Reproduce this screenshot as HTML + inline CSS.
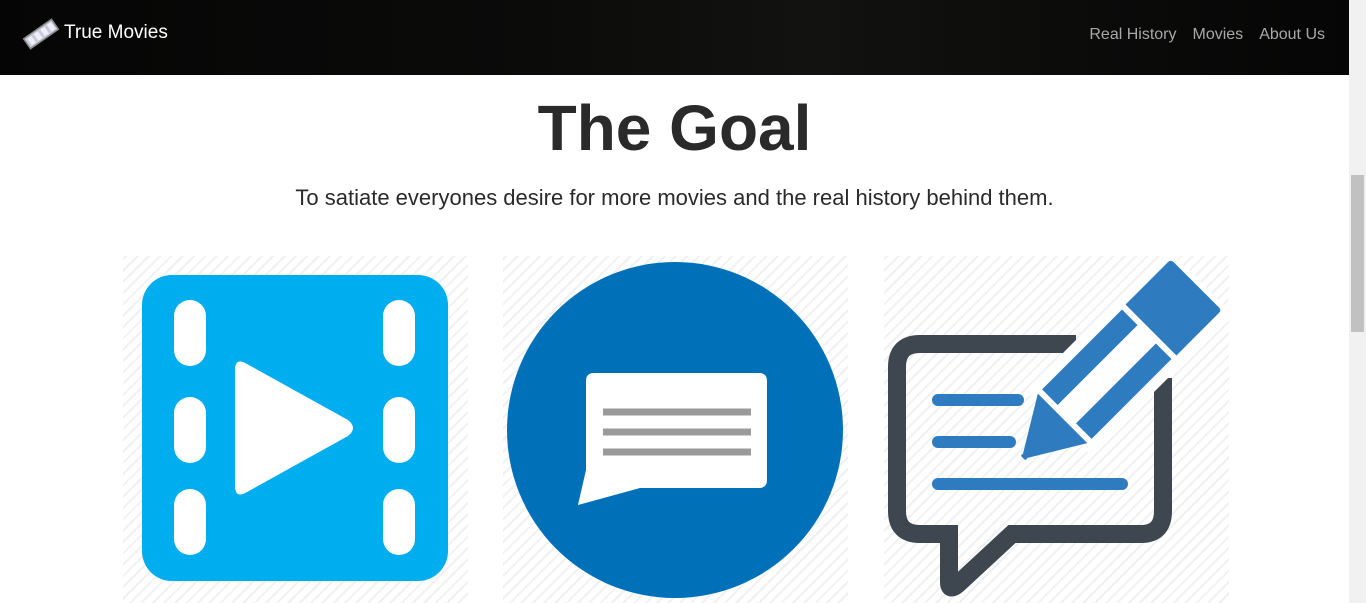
<!DOCTYPE html>
<html><head><meta charset="utf-8"><style>
*{margin:0;padding:0;box-sizing:border-box}
html,body{width:1366px;height:603px;overflow:hidden;background:#fff;font-family:"Liberation Sans",sans-serif;color:#212529}
.nav{position:absolute;left:0;top:0;width:1349px;height:75px;background:linear-gradient(90deg,#050505,#0b0b0a 40%,#121210 60%,#050505)}
.brand{position:absolute;left:64px;top:22px;color:#fff;font-size:19px}
.links{position:absolute;right:24px;top:26px;color:#a8a8a8;font-size:16px}
.links span{margin-left:16px}
.sb{position:absolute;left:1349px;top:0;width:17px;height:603px;background:#f1f1f1}
.sb div{position:absolute;left:2px;top:175px;width:13px;height:157px;background:#c1c1c1}
h1{position:absolute;left:0;width:1349px;top:91px;text-align:center;font-size:64px;font-weight:bold;color:#2a2a2a}
p{position:absolute;left:0;width:1349px;top:185px;text-align:center;font-size:22px;color:#2a2a2a}
.tile{position:absolute;top:256px;width:345px;height:347px;background:repeating-linear-gradient(-45deg,#fff 0 6px,#f1f1f1 6px 8px)}
</style></head><body>
<div class="nav">
<svg style="position:absolute;left:22px;top:16px" width="38" height="36" viewBox="0 0 38 36"><g transform="rotate(-35 19 18)"><rect x="2" y="12" width="34" height="12" fill="#c8ccd6" stroke="#888" stroke-width="1.5"/><rect x="5" y="14" width="5" height="8" fill="#eef"/><rect x="13" y="14" width="5" height="8" fill="#eef"/><rect x="21" y="14" width="5" height="8" fill="#eef"/><rect x="29" y="14" width="5" height="8" fill="#eef"/></g></svg>
<div class="brand">True Movies</div>
<div class="links"><span>Real History</span><span>Movies</span><span>About Us</span></div>
</div>
<div class="sb"><div></div></div>
<h1>The Goal</h1>
<p>To satiate everyones desire for more movies and the real history behind them.</p>
<div class="tile" style="left:123px"></div>
<div class="tile" style="left:503px"></div>
<div class="tile" style="left:884px"></div>
<svg style="position:absolute;left:0;top:0" width="1349" height="603">
<rect x="142" y="275" width="306" height="306" rx="30" fill="#00adef"/>
<g fill="#fff">
<rect x="174" y="300" width="32" height="66" rx="16"/><rect x="174" y="397" width="32" height="66" rx="16"/><rect x="174" y="489" width="32" height="66" rx="16"/>
<rect x="383" y="300" width="32" height="66" rx="16"/><rect x="383" y="397" width="32" height="66" rx="16"/><rect x="383" y="489" width="32" height="66" rx="16"/>
<path d="M235 370 Q235 357 247 364 L348 420 Q358 428 348 436 L247 492 Q235 499 235 486 Z"/>
</g>
<circle cx="675" cy="430" r="168" fill="#0071b9"/>
<path d="M594 373 H759 Q767 373 767 381 V480 Q767 488 759 488 H640 L578 505 L586 470 V381 Q586 373 594 373 Z" fill="#fff"/>
<g stroke="#9a9a9a" stroke-width="7"><line x1="603" y1="412" x2="751" y2="412"/><line x1="603" y1="432" x2="751" y2="432"/><line x1="603" y1="452" x2="751" y2="452"/></g>
<path d="M1076 344 H920 Q897 344 897 367 V511 Q897 534 920 534 H949 V582 Q949 592 958 584 L1012 534 H1141 Q1163 534 1163 511 V378" fill="none" stroke="#3e4650" stroke-width="18"/>
<g stroke="#2f7bbf" stroke-width="12" stroke-linecap="round"><line x1="938" y1="400" x2="1018" y2="400"/><line x1="938" y1="442" x2="1010" y2="442"/><line x1="938" y1="484" x2="1122" y2="484"/></g>
<g transform="translate(1023,458) rotate(-45)">
<rect x="50" y="-46" width="200" height="92" fill="#fff"/>
<path d="M0 -2 L0 2 Q0 4 3 3 L56 35 L56 -35 L3 -3 Q0 -4 0 -2Z" fill="#2f7bbf"/>
<rect x="62" y="-35" width="113" height="22" fill="#2f7bbf"/>
<rect x="62" y="13" width="113" height="22" fill="#2f7bbf"/>
<path d="M181 -36 H241 Q245 -36 245 -32 V32 Q245 36 241 36 H181 Z" fill="#2f7bbf"/>
</g>
</svg>
</body></html>
